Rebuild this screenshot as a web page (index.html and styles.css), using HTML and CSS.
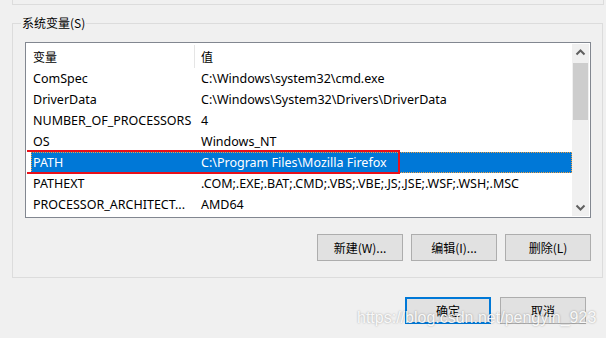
FILE: index.html
```html
<!DOCTYPE html>
<html lang="zh-CN">
<head>
  <meta charset="UTF-8">
  <title>系统变量</title>
  <link rel="stylesheet" href="styles.css">
</head>
<body>
  <div class="dialog">
    <div class="group-stub"></div>

    <fieldset class="group">
      <legend>系统变量(S)</legend>

      <div class="listbox">
        <div class="list">
          <div class="list-head">
            <div class="col-name">变量</div>
            <div class="col-value">值</div>
          </div>
          <div class="row"><div class="col-name">ComSpec</div><div class="col-value">C:\Windows\system32\cmd.exe</div></div>
          <div class="row"><div class="col-name">DriverData</div><div class="col-value">C:\Windows\System32\Drivers\DriverData</div></div>
          <div class="row"><div class="col-name">NUMBER_OF_PROCESSORS</div><div class="col-value">4</div></div>
          <div class="row"><div class="col-name">OS</div><div class="col-value">Windows_NT</div></div>
          <div class="row selected">
            <div class="col-name">PATH</div><div class="col-value">C:\Program Files\Mozilla Firefox</div>
            <span class="mark"></span>
          </div>
          <div class="row"><div class="col-name">PATHEXT</div><div class="col-value">.COM;.EXE;.BAT;.CMD;.VBS;.VBE;.JS;.JSE;.WSF;.WSH;.MSC</div></div>
          <div class="row"><div class="col-name">PROCESSOR_ARCHITECT...</div><div class="col-value">AMD64</div></div>
        </div>

        <div class="scrollbar">
          <svg class="arrow" width="17" height="17" viewBox="0 0 17 17"><path d="M4.5 10.5 L8.5 6.5 L12.5 10.5" fill="none" stroke="#606060" stroke-width="2"/></svg>
          <div class="track"><div class="thumb"></div></div>
          <svg class="arrow" width="17" height="17" viewBox="0 0 17 17"><path d="M4.5 6.5 L8.5 10.5 L12.5 6.5" fill="none" stroke="#606060" stroke-width="2"/></svg>
        </div>
      </div>

      <div class="actions">
        <button>新建(W)...</button>
        <button>编辑(I)...</button>
        <button>删除(L)</button>
      </div>
    </fieldset>

    <div class="footer">
      <button class="default">确定</button>
      <button>取消</button>
    </div>

    <div class="watermark">https://blog.csdn.net/pengyin_923</div>
  </div>
</body>
</html>
```

FILE: styles.css
```css
/* Reset */
* {
  margin: 0;
  padding: 0;
  box-sizing: border-box;
}

body {
  background: #f0f0f0;
  font-family: "Noto Sans", "Noto Sans CJK SC", sans-serif;
  font-size: 12px;
  color: #000;
}

.dialog {
  position: relative;
  width: 606px;
  height: 338px;
  overflow: hidden;
}

/* bottom edge of the group above */
.group-stub {
  margin: 0 2px 0 12px;
  height: 5px;
  border: 1px solid #dcdcdc;
  border-top: none;
}

.group {
  margin: 10px 3px 0 12px;
  padding: 11px 11px 16px 12px;
  border: 1px solid #dcdcdc;
}

.group legend {
  margin-left: -4px;
  padding: 0 1px;
  line-height: 16px;
  font-family: "Noto Sans CJK SC", sans-serif;
}

/* list view */
.listbox {
  display: flex;
  height: 176px;
  border: 1px solid #828790;
  padding: 1px;
  background: #fff;
}

.list {
  flex: 1;
  overflow: hidden;
  font-size: 12.5px;
}

.list-head {
  display: flex;
  height: 24px;
  align-items: center;
  font-family: "Noto Sans CJK SC", sans-serif;
  font-size: 12px;
}

.list-head .col-name {
  width: 168px;
  padding-left: 6px;
  line-height: 23px;
  border-right: 1px solid #e5e5e5;
}

.list-head .col-value {
  padding-left: 6px;
}

.row {
  position: relative;
  display: flex;
  align-items: center;
  height: 21px;
  margin-left: 4px;
  white-space: nowrap;
}

.row .col-name {
  width: 164px;
  padding-left: 2px;
  overflow: hidden;
}

.row .col-value {
  padding-left: 6px;
}

.row.selected {
  background: #0078d7;
  color: #fff;
  outline: 1px dotted #f0a040;
  outline-offset: -1px;
}

/* red annotation box */
.mark {
  position: absolute;
  left: -10px;
  top: -2px;
  width: 379px;
  height: 24px;
  border: 2px solid #e8101a;
}

/* scrollbar */
.scrollbar {
  width: 17px;
  display: flex;
  flex-direction: column;
  background: #f0f0f0;
}

.arrow {
  display: block;
  flex: none;
}

.track {
  flex: 1;
  padding: 2px 1px;
}

.thumb {
  height: 57px;
  background: #cdcdcd;
}

/* buttons */
.actions {
  display: flex;
  justify-content: flex-end;
  gap: 8px;
  margin-top: 16px;
}

button {
  width: 86px;
  height: 27px;
  background: #e1e1e1;
  border: 1px solid #adadad;
  font-family: "Noto Sans CJK SC", sans-serif;
  font-size: 12px;
  color: #000;
}

.footer {
  display: flex;
  justify-content: flex-end;
  gap: 9px;
  margin: 19px 20px 0 0;
}

button.default {
  border: 2px solid #0078d7;
}

.watermark {
  position: absolute;
  left: 357px;
  top: 309px;
  font-family: "Liberation Sans", sans-serif;
  font-size: 16px;
  color: rgba(255, 255, 255, 0.92);
  text-shadow: 0 0 2px rgba(0, 0, 0, 0.35);
}
```
